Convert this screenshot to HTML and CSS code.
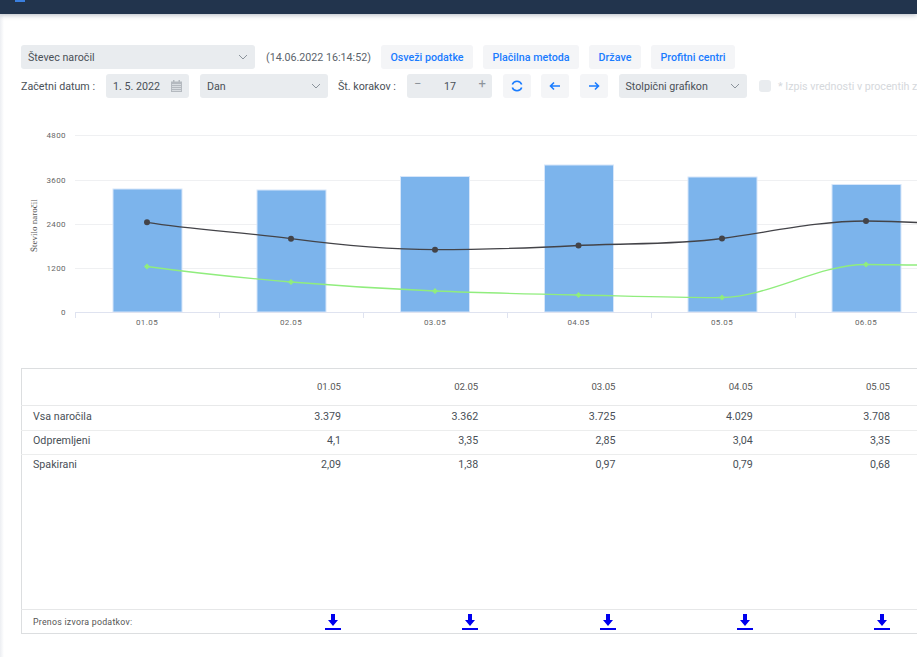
FILE: index.html
```html
<!DOCTYPE html>
<html lang="sl">
<head>
<meta charset="utf-8">
<title>Števec naročil</title>
<link rel="stylesheet" href="styles.css">
</head>
<body>
<header class="topbar"><span class="logo"></span></header>
<main class="content">
  <div class="toolbar row-one">
    <div class="select select-counter"><span>Števec naročil</span><svg class="chev" viewBox="0 0 10 6"><path d="M1 1l4 4 4-4"/></svg></div>
    <span class="stamp">(14.06.2022 16:14:52)</span>
    <button class="btn btn-refresh">Osveži podatke</button>
    <button class="btn btn-pay">Plačilna metoda</button>
    <button class="btn btn-land">Države</button>
    <button class="btn btn-profit">Profitni centri</button>
  </div>
  <div class="toolbar row-two">
    <span class="label label-date">Začetni datum :</span>
    <div class="select select-date"><span>1. 5. 2022</span>
      <svg class="cal" viewBox="0 0 11 12"><path d="M0 1.500h11V12H0zM2 0h1.500v2H2zM7.500 0H9v2H7.500z"/><path class="cal-lines" d="M1 4.500h9M1 6.500h9M1 8.500h9M1 10.500h9"/></svg>
    </div>
    <div class="select select-unit"><span>Dan</span><svg class="chev" viewBox="0 0 10 6"><path d="M1 1l4 4 4-4"/></svg></div>
    <span class="label label-steps">Št. korakov :</span>
    <div class="select stepper"><span class="step-sign">−</span><span class="step-value">17</span><span class="step-sign">+</span></div>
    <button class="btn icon-btn btn-sync"><svg viewBox="0 0 12 12"><path d="M1.300 4.500A5 5 0 0 1 10.700 4.500M10.700 7.500A5 5 0 0 1 1.300 7.500"/></svg></button>
    <button class="btn icon-btn btn-prev"><svg viewBox="0 0 12 12"><path d="M11 6H1.500M5 2.500L1.500 6 5 9.500"/></svg></button>
    <button class="btn icon-btn btn-next"><svg viewBox="0 0 12 12"><path d="M1 6h9.500M7 2.500L10.500 6 7 9.500"/></svg></button>
    <div class="select select-chart"><span>Stolpični grafikon</span><svg class="chev" viewBox="0 0 10 6"><path d="M1 1l4 4 4-4"/></svg></div>
    <span class="check"></span>
    <span class="check-label">* Izpis vrednosti v procentih z</span>
  </div>

  <svg class="chart" width="896" height="215" viewBox="21 120 896 215">
    <g class="grid">
      <path d="M75 135.500H917M75 180.500H917M75 224.500H917M75 268.500H917"/>
    </g>
    <g class="bars">
      <rect x="113" y="189" width="69" height="123"/>
      <rect x="257" y="190" width="69" height="122"/>
      <rect x="400.500" y="176.500" width="69" height="135.500"/>
      <rect x="544.500" y="165" width="69" height="147"/>
      <rect x="688" y="177" width="69" height="135"/>
      <rect x="832" y="184.500" width="69" height="127.500"/>
    </g>
    <g class="axis">
      <path d="M75 312.500H917M75.500 313v5M219.500 313v5M363.500 313v5M507.500 313v5M651.500 313v5M795.500 313v5"/>
    </g>
    <path class="line line-dark" d="M147 222.300C195 230 243 232 291 238.700C339 245 387 249.700 435 249.700C483 249.700 530 248 578.500 245.500C626 243 674 245 722 238.500C770 232 818 221 866 221C885 221 900 221.500 917 222.500"/>
    <path class="line line-green" d="M147 266.500C195 273 243 278 291 282C339 286 387 289 435 291C483 293 530 294 578.500 295C626 296 695 298 722 297.500C770 296.500 818 264.500 866 264.500C885 264.500 900 265 917 265"/>
    <g class="dots-dark">
      <circle cx="147" cy="222.300" r="3"/><circle cx="291" cy="238.700" r="3"/><circle cx="435" cy="249.700" r="3"/><circle cx="578.500" cy="245.500" r="3"/><circle cx="722" cy="238.500" r="3"/><circle cx="866" cy="221" r="3"/>
    </g>
    <g class="dots-green">
      <path d="M147 263.500l3 3-3 3-3-3zM291 279l3 3-3 3-3-3zM435 288l3 3-3 3-3-3zM578.500 292l3 3-3 3-3-3zM722 294.500l3 3-3 3-3-3zM866 261.500l3 3-3 3-3-3z"/>
    </g>
    <g class="tick-y">
      <text x="66" y="138">4800</text><text x="66" y="182.500">3600</text><text x="66" y="226.500">2400</text><text x="66" y="270.500">1200</text><text x="66" y="314.500">0</text>
    </g>
    <g class="tick-x">
      <text x="147" y="325">01.05</text><text x="291" y="325">02.05</text><text x="435" y="325">03.05</text><text x="578.500" y="325">04.05</text><text x="722" y="325">05.05</text><text x="866" y="325">06.05</text>
    </g>
    <text class="axis-title" transform="translate(37 252) rotate(-90)">Število naročil</text>
  </svg>

  <table class="data">
    <thead>
      <tr><th></th><th>01.05</th><th>02.05</th><th>03.05</th><th>04.05</th><th>05.05</th><th></th></tr>
    </thead>
    <tbody>
      <tr><td>Vsa naročila</td><td>3.379</td><td>3.362</td><td>3.725</td><td>4.029</td><td>3.708</td><td></td></tr>
      <tr><td>Odpremljeni</td><td>4,1</td><td>3,35</td><td>2,85</td><td>3,04</td><td>3,35</td><td></td></tr>
      <tr><td>Spakirani</td><td>2,09</td><td>1,38</td><td>0,97</td><td>0,79</td><td>0,68</td><td></td></tr>
      <tr class="spacer"><td colspan="7"></td></tr>
    </tbody>
    <tfoot>
      <tr>
        <td>Prenos izvora podatkov:</td>
        <td><svg class="dl" viewBox="0 0 16 16"><path d="M6 0h4v6h3L8 12 3 6h3zM0 14h16v2H0z"/></svg></td>
        <td><svg class="dl" viewBox="0 0 16 16"><path d="M6 0h4v6h3L8 12 3 6h3zM0 14h16v2H0z"/></svg></td>
        <td><svg class="dl" viewBox="0 0 16 16"><path d="M6 0h4v6h3L8 12 3 6h3zM0 14h16v2H0z"/></svg></td>
        <td><svg class="dl" viewBox="0 0 16 16"><path d="M6 0h4v6h3L8 12 3 6h3zM0 14h16v2H0z"/></svg></td>
        <td><svg class="dl" viewBox="0 0 16 16"><path d="M6 0h4v6h3L8 12 3 6h3zM0 14h16v2H0z"/></svg></td>
        <td></td>
      </tr>
    </tfoot>
  </table>
</main>
</body>
</html>
```

FILE: styles.css
```css
* { box-sizing: border-box; }
html, body { height: 100%; }
body {
  margin: 0;
  width: 917px;
  height: 657px;
  overflow: hidden;
  background: linear-gradient(to right, #eceef2, #fff 4px);
  font-family: Roboto, "Liberation Sans", sans-serif;
  font-size: 10.700px;
  color: #495057;
}
.topbar {
  height: 14px;
  background: #22344d;
  box-shadow: 0 1px 5px rgba(34, 52, 77, .35);
  padding-left: 15px;
}
.logo { display: block; width: 10px; height: 2px; background: #3a7fe0; }
.content { padding: 31px 0 0 21px; }
.toolbar { display: flex; align-items: center; height: 24px; white-space: nowrap; overflow: hidden; }
.row-two { margin-top: 5px; }
.select {
  display: flex;
  align-items: center;
  justify-content: space-between;
  height: 24px;
  background: #e9ecef;
  border-radius: 3px;
  padding: 0 7px;
  color: #495057;
  flex: none;
}
.select-counter { width: 234px; }
.chev { width: 10px; height: 6px; fill: none; stroke: #8b939b; stroke-width: 1; }
.stamp { margin-left: 11px; color: #5b636b; width: 104px; flex: none; }
.btn {
  height: 24px;
  border: 0;
  border-radius: 3px;
  background: #f4f5f7;
  color: #1a7cff;
  font: 500 10.700px Roboto, "Liberation Sans", sans-serif;
  padding: 0;
  flex: none;
}
.btn-refresh { margin-left: 11px; width: 92px; }
.btn-pay { margin-left: 10px; width: 96px; }
.btn-land { margin-left: 10px; width: 52px; }
.btn-profit { margin-left: 10px; width: 84px; }
.label { color: #495057; flex: none; }
.label-date { width: 85px; }
.select-date { width: 83px; }
.cal { width: 11px; height: 12px; fill: #b4b9bf; }
.cal-lines { fill: none; stroke: #e9ecef; stroke-width: .7; }
.select-unit { width: 128px; margin-left: 11px; }
.label-steps { margin-left: 10px; width: 69px; }
.stepper { width: 85px; padding: 0 6px 0 7px; }
.step-sign { color: #8d949b; font-size: 13px; line-height: 18px; height: 22px; }
.step-value { margin-left: 0; }
.icon-btn { width: 28px; display: flex; align-items: center; justify-content: center; }
.icon-btn svg { width: 12px; height: 12px; fill: none; stroke: #1a7cff; stroke-width: 1.600; }
.btn-sync { margin-left: 11px; }
.btn-prev { margin-left: 10px; }
.btn-next { margin-left: 11px; }
.select-chart { width: 128px; margin-left: 11px; padding-left: 6.500px; }
.check { width: 12px; height: 12px; border-radius: 3px; background: #e9ecef; margin-left: 12px; flex: none; }
.check-label { margin-left: 7px; color: #d5d8dc; }
.chart { display: block; margin-top: 22px; }
.grid path { fill: none; stroke: #eff0f2; stroke-width: 1; }
.bars rect { fill: #7cb4ec; stroke: #d6e6fa; stroke-width: 1; }
.axis path { fill: none; stroke: #dfe3f0; stroke-width: 1; }
.line { fill: none; stroke-width: 1.300; }
.line-dark { stroke: #434348; }
.line-green { stroke: #90ed7d; }
.dots-dark { fill: #434348; }
.dots-green { fill: #90ed7d; }
.tick-y text, .tick-x text { font: 8px Roboto, "Liberation Sans", sans-serif; letter-spacing: .4px; fill: #666; }
.tick-y text { text-anchor: end; }
.tick-x text { text-anchor: middle; }
.axis-title { font: 9px "Liberation Serif", serif; fill: #555; }
.data {
  margin-top: 33px;
  border-collapse: collapse;
  table-layout: fixed;
  width: 896px;
  height: 266px;
  border: 1px solid #dcdee0;
  border-right: 0;
}
.data th, .data td { padding: 0 10.500px 0 0; text-align: right; font-weight: 400; }
.data th:first-child, .data td:first-child { width: 192.750px; padding-left: 11px; text-align: left; }
.data th { width: 137.250px; height: 37px; padding-bottom: 2px; font-size: 9.600px; color: #555; border-bottom: 1px solid #e8e9ea; }
.data th:last-child { width: auto; padding: 0; }
.data tbody td { height: 24.500px; padding-bottom: 3px; border-bottom: 1px solid #eceded; color: #495057; }
.data tbody tr:nth-child(3) td { padding-bottom: 5px; border-bottom: 0; }
.data .spacer td { height: auto; padding: 0; border-bottom: 0; }
.data tfoot td { height: 24px; border-top: 1px solid #e6e7e8; }
.data tfoot td:first-child { font-size: 8.800px; letter-spacing: .25px; color: #555; }
.dl { display: inline-block; width: 16px; height: 16px; fill: #0000ee; vertical-align: middle; }
```
